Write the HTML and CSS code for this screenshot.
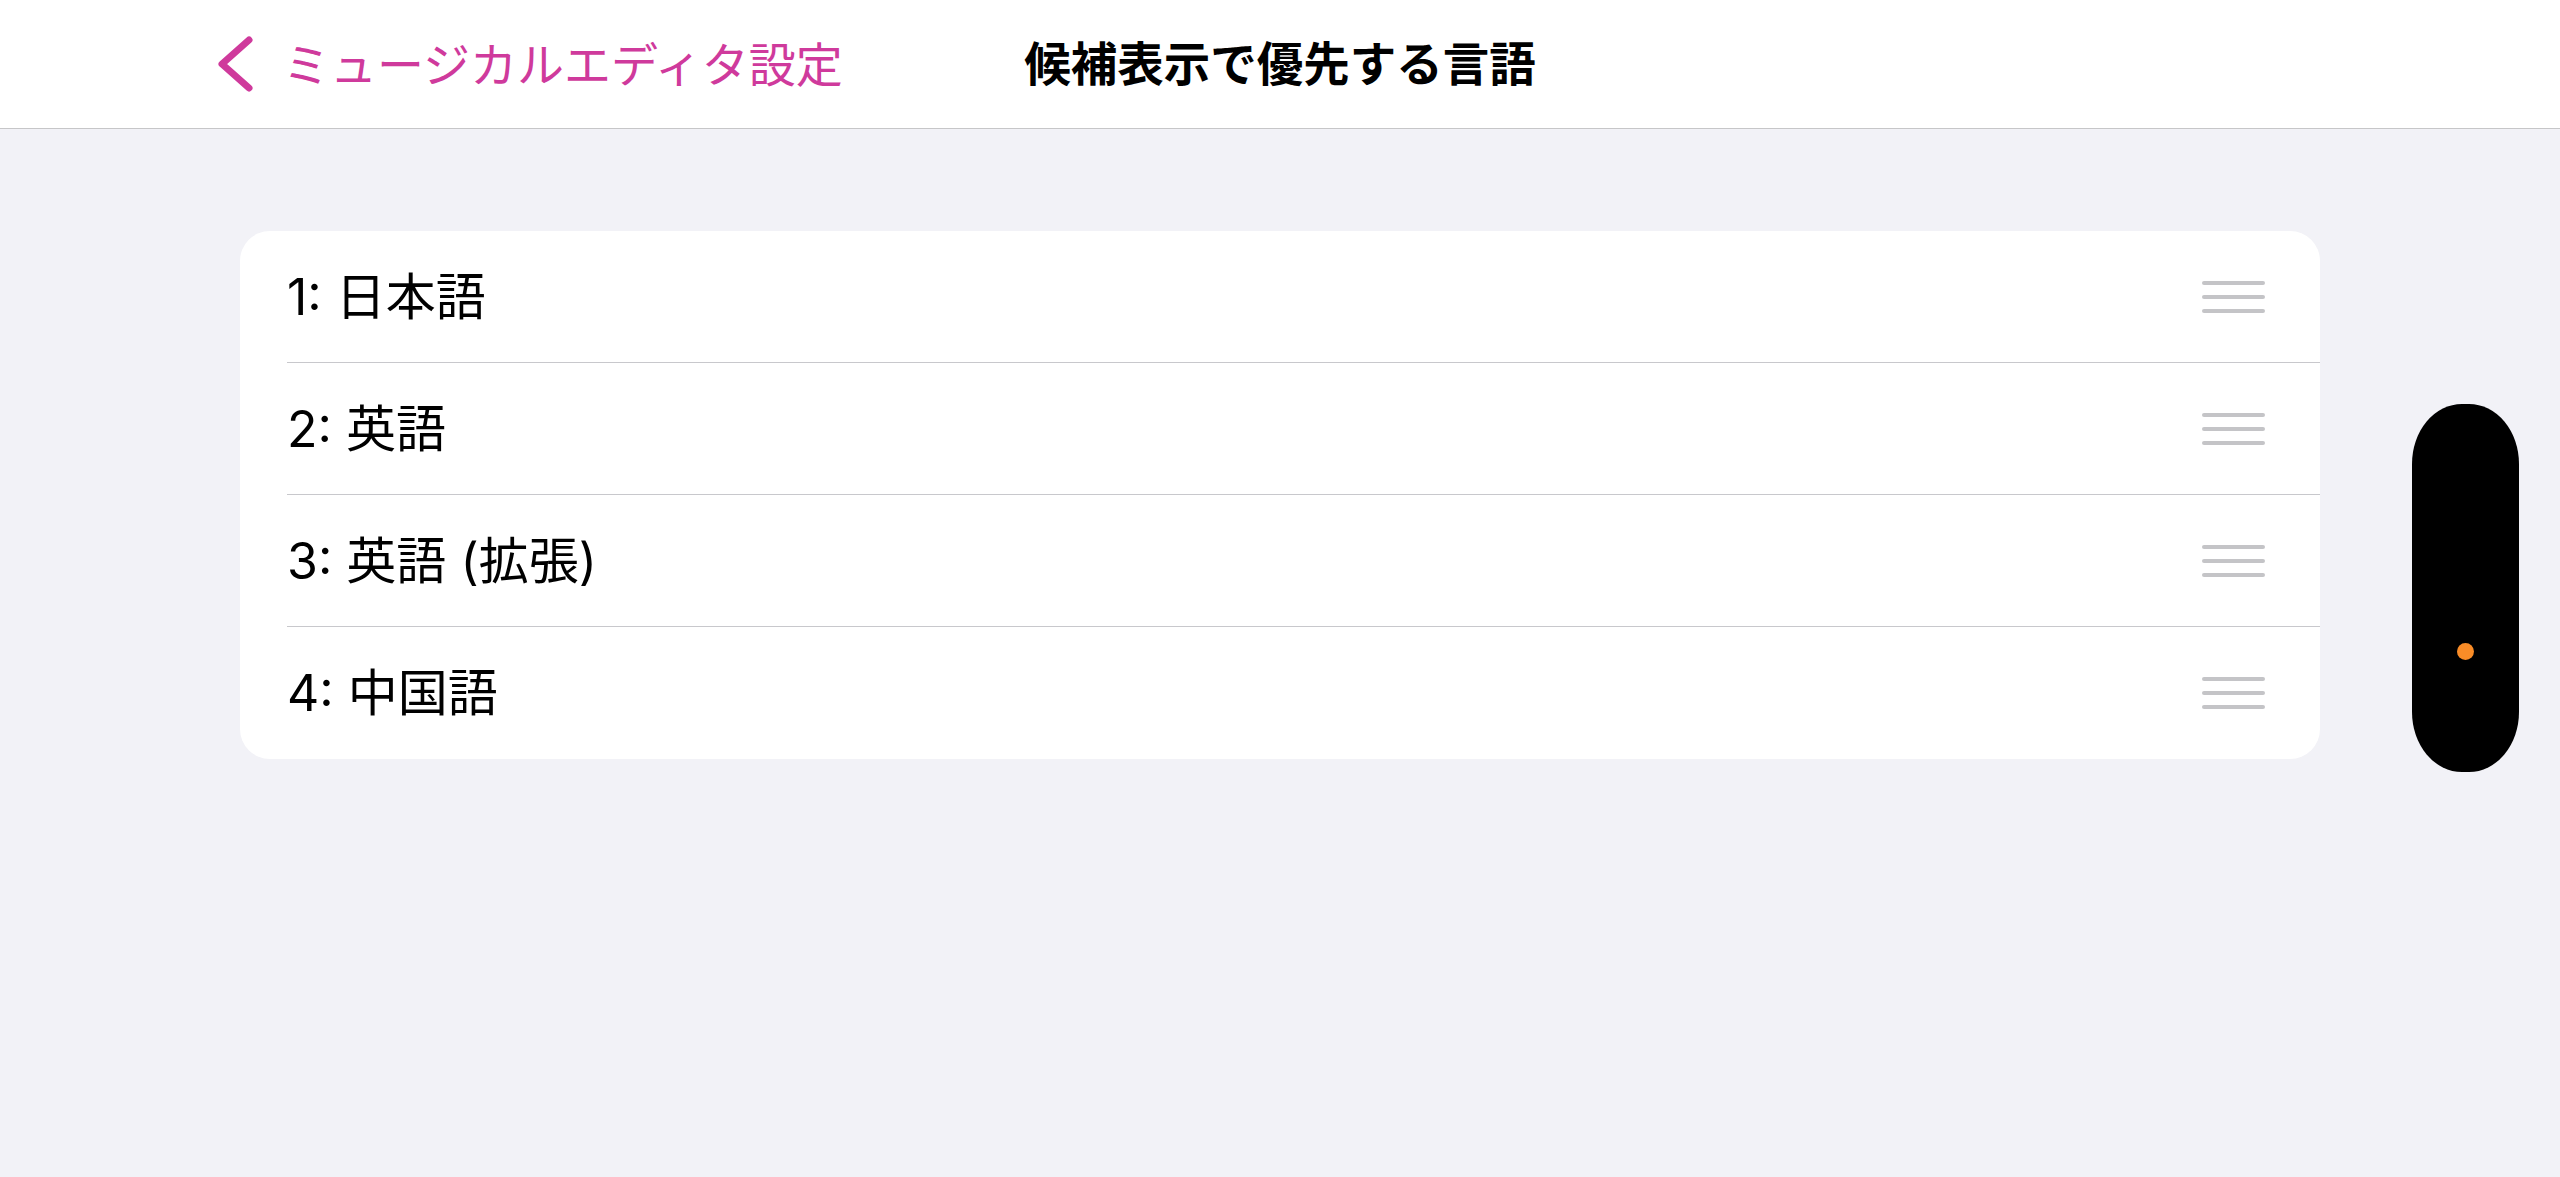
FILE: index.html
```html
<!DOCTYPE html>
<html lang="ja">
<head>
    <meta charset="UTF-8">
    <title>候補表示で優先する言語</title>
    <link rel="stylesheet" href="styles.css">
</head>
<body>
    <div class="navbar">
        <a class="back" href="#">
            <svg class="chevron" width="35" height="56" viewBox="0 0 35 56">
                <path d="M31 4 L4 28 L31 52" />
            </svg>
            <span>ミュージカルエディタ設定</span>
        </a>
        <div class="title">候補表示で優先する言語</div>
        <div></div>
    </div>

    <div class="content">
        <div class="list">
            <div class="row">
                <span class="label">1: 日本語</span>
                <div class="handle"><i></i><i></i><i></i></div>
            </div>
            <div class="row">
                <span class="label">2: 英語</span>
                <div class="handle"><i></i><i></i><i></i></div>
            </div>
            <div class="row">
                <span class="label">3: 英語 (拡張)</span>
                <div class="handle"><i></i><i></i><i></i></div>
            </div>
            <div class="row">
                <span class="label">4: 中国語</span>
                <div class="handle"><i></i><i></i><i></i></div>
            </div>
        </div>
    </div>

    <!-- floating pencil toolbar -->
    <div class="pill"><span class="dot"></span></div>
</body>
</html>
```

FILE: styles.css
```css
body {
    margin: 0;
    height: 100vh;
    background-color: #f2f2f7;
    font-family: "Inter", "Noto Sans CJK JP", sans-serif;
    color: #000;
}
.navbar {
    height: 128px;
    background-color: #fff;
    border-bottom: 1px solid #c6c6c8;
    display: grid;
    grid-template-columns: 1fr auto 1fr;
    align-items: center;
}
.back {
    display: flex;
    align-items: center;
    gap: 30px;
    padding-left: 218px;
    color: #cf3a9c;
    text-decoration: none;
    font-size: 47px;
    line-height: 1;
}
.chevron path {
    fill: none;
    stroke: #cf3a9c;
    stroke-width: 7;
    stroke-linecap: round;
    stroke-linejoin: round;
}
.title {
    font-size: 46.5px;
    font-weight: 700;
    line-height: 1;
}
.content {
    padding: 102px 240px 0 240px;
}
.list {
    background-color: #fff;
    border-radius: 30px;
    overflow: hidden;
}
.row {
    box-sizing: border-box;
    height: 132px;
    margin-left: 47px;
    padding-right: 55px;
    display: flex;
    align-items: center;
    justify-content: space-between;
    border-bottom: 1px solid #c8c8cc;
}
.row:last-child {
    border-bottom: none;
}
.label {
    font-size: 50px;
    line-height: 1;
}
.handle {
    width: 63px;
    display: flex;
    flex-direction: column;
    gap: 10px;
}
.handle i {
    display: block;
    height: 4px;
    border-radius: 2px;
    background-color: #c4c4c7;
}
.pill {
    position: absolute;
    left: 2412px;
    top: 404px;
    width: 107px;
    height: 368px;
    background-color: #000;
    border-radius: 50px / 60px;
    display: flex;
    justify-content: center;
    padding-top: 239px;
    box-sizing: border-box;
}
.dot {
    width: 17px;
    height: 17px;
    border-radius: 50%;
    background-color: #f98c27;
}
```
